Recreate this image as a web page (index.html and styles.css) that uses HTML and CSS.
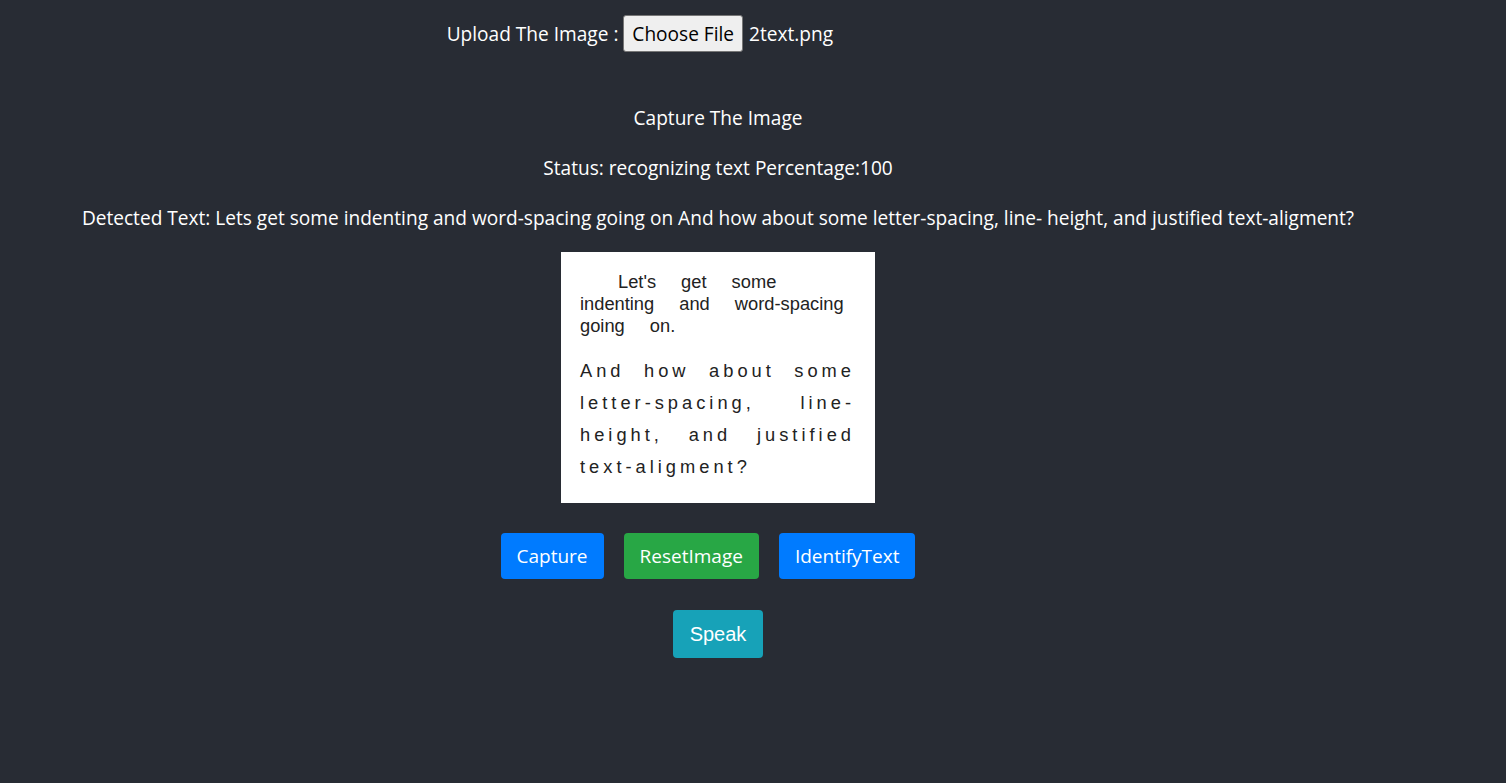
FILE: index.html
```html
<!DOCTYPE html>
<html lang="en">
<head>
<meta charset="utf-8">
<title>Text Reader</title>
<link rel="stylesheet" href="styles.css">
</head>
<body>
<div class="app">
  <div class="upload">
    <span class="upload-label">Upload The Image :&nbsp;</span>
    <span class="file-input">
      <span class="file-btn">Choose File</span>
      <span class="file-name">2text.png</span>
    </span>
  </div>
  <p class="title">Capture The Image</p>
  <p class="line">Status: recognizing text Percentage:100</p>
  <p class="line">Detected Text: Lets get some indenting and word-spacing going on And how about some letter-spacing, line- height, and justified text-aligment?</p>
  <div class="preview">
    <div class="para1">
      <div class="l1">Let's get some</div>
      <div>indenting and word-spacing</div>
      <div>going on.</div>
    </div>
    <div class="para2">
      <div class="jl">And how about some</div>
      <div class="jl">letter-spacing, line-</div>
      <div class="jl">height, and justified</div>
      <div>text-aligment?</div>
    </div>
  </div>
  <div class="actions">
    <button class="btn btn-blue">Capture</button>
    <button class="btn btn-green">ResetImage</button>
    <button class="btn btn-blue">IdentifyText</button>
  </div>
  <div class="speak-row">
    <button class="btn btn-teal speak">Speak</button>
  </div>
</div>
</body>
</html>
```

FILE: styles.css
```css
html, body {
  margin: 0;
  padding: 0;
  background: #282c34;
  height: 100%;
}
body {
  color: #ffffff;
  font-family: "Open Sans", "Noto Sans", sans-serif;
  font-size: 19.1px;
}
.app {
  width: 1436px;
  text-align: center;
}
.upload {
  display: flex;
  justify-content: center;
  align-items: center;
  margin-top: 15px;
  height: 37px;
}
.file-input {
  display: flex;
  align-items: center;
  width: 366px;
}
.file-btn {
  box-sizing: border-box;
  height: 37px;
  padding: 0 8px;
  display: flex;
  align-items: center;
  background: #efefef;
  color: #000;
  border: 1px solid #767676;
  border-radius: 3px;
}
.file-name {
  margin-left: 6px;
}
.title {
  margin: 53px 0 0;
  line-height: 27px;
}
.line {
  margin: 23px 0 0;
  line-height: 27px;
}
.preview {
  box-sizing: border-box;
  width: 314px;
  height: 251px;
  margin: 20px auto 0;
  background: #fff;
  color: #222;
  font-family: "Liberation Sans", Arial, sans-serif;
  font-size: 18.3px;
  text-align: left;
  padding: 19px 24px 0 19px;
}
.para1 {
  line-height: 22px;
  word-spacing: 20px;
  margin-right: -3px;
}
.para1 .l1 {
  padding-left: 38px;
}
.para2 {
  margin-top: 18px;
  line-height: 32px;
  letter-spacing: 4px;
  margin-right: -4px;
}
.jl {
  text-align: justify;
  text-align-last: justify;
}
.actions {
  display: flex;
  justify-content: center;
  margin-top: 30px;
}
.btn {
  border: none;
  color: #fff;
  font-family: "Open Sans", "Noto Sans", sans-serif;
  font-size: 19px;
  height: 46px;
  padding: 0 16px;
  border-radius: 4px;
  margin-right: 20px;
}
.btn-blue { background: #007bff; }
.btn-green { background: #28a745; }
.btn-teal { background: #17a2b8; }
.speak-row {
  display: flex;
  justify-content: center;
  margin-top: 31px;
}
.speak {
  margin: 0;
  height: 48px;
  font-family: "Liberation Sans", Arial, sans-serif;
  font-size: 20px;
  padding: 0 17px;
}
```
